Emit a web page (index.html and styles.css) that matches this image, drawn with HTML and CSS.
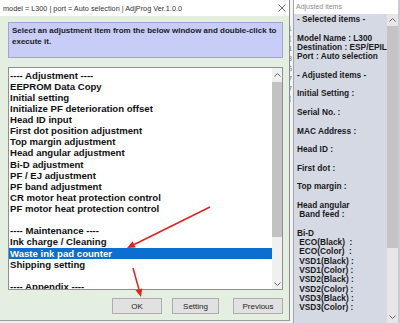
FILE: index.html
```html
<!DOCTYPE html>
<html lang="en">
<head>
  <meta charset="UTF-8">
  <meta name="viewport" content="width=device-width, initial-scale=1.0">
  <title>AdjProg</title>
  <link rel="stylesheet" href="styles.css">
</head>
<body>
  <div class="screen">
    <div class="main-window">
      <div class="title-bar">
        <span class="title">model = L300 | port = Auto selection | AdjProg Ver.1.0.0</span>
        <svg class="close" width="8" height="8" viewBox="0 0 8 8"><path d="M0.5 0.5L7.5 7.5M7.5 0.5L0.5 7.5" stroke="#555" stroke-width="0.9"/></svg>
      </div>
      <div class="window-body">
        <div class="hint">Select an adjustment item from the below window and double-click to<br>execute it.</div>
        <div class="listbox">
          <ul class="items">
            <li>---- Adjustment ----</li>
            <li>EEPROM Data Copy</li>
            <li>Initial setting</li>
            <li>Initialize PF deterioration offset</li>
            <li>Head ID input</li>
            <li>First dot position adjustment</li>
            <li>Top margin adjustment</li>
            <li>Head angular adjustment</li>
            <li>Bi-D adjustment</li>
            <li>PF / EJ adjustment</li>
            <li>PF band adjustment</li>
            <li>CR motor heat protection control</li>
            <li>PF motor heat protection control</li>
            <li></li>
            <li>---- Maintenance ----</li>
            <li>Ink charge / Cleaning</li>
            <li class="selected">Waste ink pad counter</li>
            <li>Shipping setting</li>
            <li></li>
            <li>---- Appendix ----</li>
          </ul>
          <div class="scrollbar list-scroll">
            <div class="sb-btn sb-up"><svg width="7" height="4" viewBox="0 0 7 4"><path d="M0.5 3.5L3.5 0.5L6.5 3.5" fill="none" stroke="#606060"/></svg></div>
            <div class="sb-track"><div class="sb-thumb"></div></div>
            <div class="sb-btn sb-down"><svg width="7" height="4" viewBox="0 0 7 4"><path d="M0.5 0.5L3.5 3.5L6.5 0.5" fill="none" stroke="#606060"/></svg></div>
          </div>
        </div>
        <div class="buttons">
          <button class="btn btn-ok">OK</button>
          <button class="btn btn-setting">Setting</button>
          <button class="btn btn-prev">Previous</button>
        </div>
      </div>
    </div>

    <div class="gap-strip">
      <pre class="strip-text">
l
(
1
3
6
7
7
(</pre>
    </div>

    <div class="side-panel">
      <div class="side-title">Adjusted items</div>
      <div class="side-body">
        <pre class="side-text">- Selected items -

Model Name : L300
Destination : ESP/EPIL
Port : Auto selection

- Adjusted items -

Initial Setting :

Serial No. :

MAC Address :

Head ID :

First dot :

Top margin :

Head angular
 Band feed :

Bi-D
 ECO(Black)  :
 ECO(Color)  :
 VSD1(Black) :
 VSD1(Color) :
 VSD2(Black) :
 VSD2(Color) :
 VSD3(Black) :
 VSD3(Color) :</pre>
        <div class="scrollbar side-scroll">
          <div class="sb-btn sb-up"><svg width="7" height="4" viewBox="0 0 7 4"><path d="M0.5 3.5L3.5 0.5L6.5 3.5" fill="none" stroke="#606060"/></svg></div>
          <div class="sb-track"><div class="sb-thumb"></div></div>
          <div class="sb-btn sb-down"><svg width="7" height="4" viewBox="0 0 7 4"><path d="M0.5 0.5L3.5 3.5L6.5 0.5" fill="none" stroke="#606060"/></svg></div>
        </div>
      </div>
    </div>
  </div>

  <!-- red annotation arrows drawn over the screenshot -->
  <svg class="arrows" width="400" height="323" viewBox="0 0 400 323">
    <line x1="210" y1="207" x2="134.2" y2="244.5" stroke="#e2231a" stroke-width="1.5"/>
    <polygon points="127,248 135.7,247.6 132.6,241.3" fill="#e2231a"/>
    <line x1="133" y1="268" x2="138.9" y2="289.3" stroke="#e2231a" stroke-width="1.5"/>
    <polygon points="141,297 142.2,288.4 135.5,290.2" fill="#e2231a"/>
  </svg>
</body>
</html>
```

FILE: styles.css
```css
* {
    box-sizing: border-box;
}

body {
    margin: 0;
    width: 400px;
    height: 323px;
    overflow: hidden;
    position: relative;
    background: #eeeeee;
    font-family: "Liberation Sans", Arial, sans-serif;
    color: #111;
}

.screen {
    display: flex;
    height: 323px;
}

/* main dialog */
.main-window {
    width: 290px;
    height: 321px;
    display: flex;
    flex-direction: column;
    background: #e4efe1;
    border-right: 1px solid #8c8c8c;
    border-bottom: 1px solid #9d9d9d;
}

.title-bar {
    height: 16px;
    flex: none;
    background: #fff;
    display: flex;
    align-items: center;
    justify-content: space-between;
    padding: 0 3px 0 3px;
}

.title {
    font-size: 7.3px;
    color: #333;
}

.window-body {
    flex: 1;
    display: flex;
    flex-direction: column;
    padding: 6px 6px 6px 8px;
}

.hint {
    height: 36px;
    flex: none;
    background: #c7cdf7;
    border: 1px solid #9ea6d6;
    padding: 2px 3px;
    font-size: 8px;
    font-weight: bold;
    line-height: 11px;
    color: #1a1a1a;
}

.listbox {
    margin-top: 9px;
    height: 223px;
    flex: none;
    display: flex;
    background: #fff;
    border: 1px solid #8e9094;
}

.items {
    flex: 1;
    list-style: none;
    margin: 0;
    padding: 1.5px 0 0 0;
    overflow: hidden;
    font-size: 9.6px;
    font-weight: bold;
    line-height: 11.14px;
}

.items li {
    height: 11.14px;
    padding-left: 1px;
    white-space: pre;
}

.items li.selected {
    background: #0a6fd1;
    color: #fff;
}

/* scrollbars */
.scrollbar {
    display: flex;
    flex-direction: column;
    background: #f0f0f0;
}

.sb-btn {
    display: flex;
    align-items: center;
    justify-content: center;
    flex: none;
}

.sb-track {
    flex: 1;
}

.sb-thumb {
    background: #c2c2c2;
}

.list-scroll {
    width: 10px;
}

.list-scroll .sb-up {
    height: 14px;
}

.list-scroll .sb-down {
    height: 10px;
}

.list-scroll .sb-thumb {
    height: 155px;
}

.buttons {
    margin-top: 8px;
    height: 16px;
    display: flex;
    justify-content: flex-end;
    gap: 10px;
}

.btn {
    height: 16px;
    padding: 0;
    background: #e1e1e1;
    border: 1px solid #adadad;
    font-family: "Liberation Sans", Arial, sans-serif;
    font-size: 8px;
    color: #222;
}

.btn-ok {
    width: 50px;
}

.btn-setting {
    width: 47px;
}

.btn-prev {
    width: 50px;
    margin-left: 4px;
}

/* sliver of the window behind */
.gap-strip {
    width: 3px;
    overflow: hidden;
    background: #f4f4f4;
}

.strip-text {
    margin: 0;
    padding-top: 24px;
    margin-left: -2px;
    font-size: 7px;
    line-height: 10px;
    color: #777;
}

/* adjusted items panel */
.side-panel {
    width: 107px;
    display: flex;
    flex-direction: column;
    background: #d5d9e4;
    border-left: 1px solid #a0a4ae;
    border-right: 2px solid #c9ccd3;
}

.side-title {
    height: 14px;
    flex: none;
    background: #fff;
    padding-left: 2px;
    font-size: 7px;
    line-height: 14px;
    color: #8c8c8c;
}

.side-body {
    flex: 1;
    display: flex;
    min-width: 0;
}

.side-text {
    flex: 1;
    min-width: 0;
    margin: 0;
    padding: 1px 0 0 3px;
    overflow: hidden;
    font-family: "Liberation Sans", Arial, sans-serif;
    font-size: 8.3px;
    font-weight: bold;
    line-height: 9.3px;
    color: #1a1a1a;
}

.side-scroll {
    width: 11px;
    flex: none;
    background: #e6e6e6;
}

.side-scroll .sb-btn {
    height: 12px;
}

.side-scroll .sb-thumb {
    height: 222px;
    background: #c4c4c4;
}

.arrows {
    position: absolute;
    top: 0;
    left: 0;
    pointer-events: none;
}
```
